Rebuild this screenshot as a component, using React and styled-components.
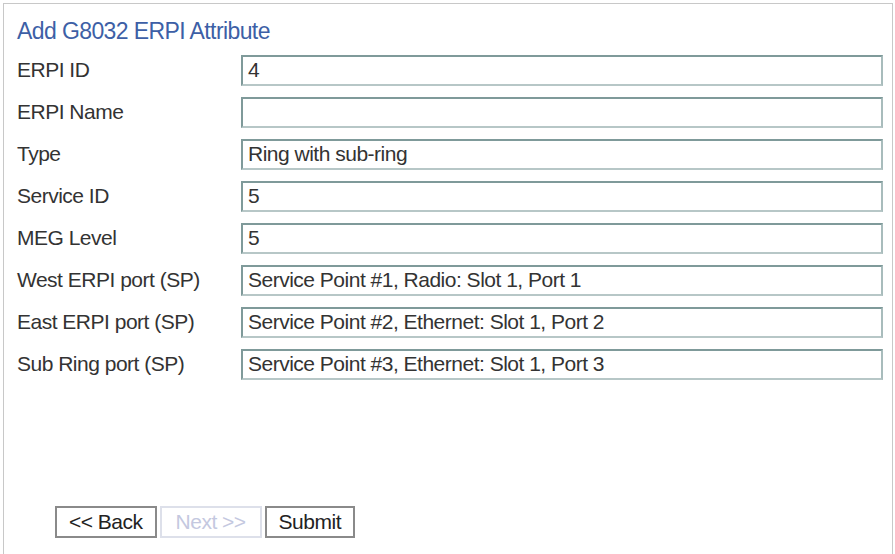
import React from "react";
import styled, { createGlobalStyle } from "styled-components";

const G = createGlobalStyle`
  html,body{margin:0;padding:0;background:#fff;}
  body{font-family:"Liberation Sans",Arial,sans-serif;}
`;
const Panel = styled.div`
  box-sizing:border-box;margin:3px 2px 0 3px;height:551px;border:1px solid #c8c8c8;border-bottom:none;
  padding:14px 9px 0 13px;display:flex;flex-direction:column;
`;
const Title = styled.div`color:#3d5fa6;font-size:23px;letter-spacing:-0.6px;margin-bottom:4px;`;
const Row = styled.div`display:flex;align-items:center;height:42px;`;
const Label = styled.div`width:224px;font-size:21px;letter-spacing:-0.5px;color:#333;white-space:nowrap;`;
const Field = styled.div`
  flex:1;height:31px;box-sizing:border-box;border:2px solid #7f9a9a;border-right-color:#a8bcbc;border-bottom-color:#b7c7c7;
  font-size:21px;letter-spacing:-0.5px;color:#333;padding:1px 5px;white-space:nowrap;
`;
const Buttons = styled.div`display:flex;gap:3px;margin-top:auto;margin-bottom:16px;margin-left:38px;`;
const Btn = styled.div`
  box-sizing:border-box;height:32px;padding:0 ${p=>p.$px}px;display:flex;align-items:center;font-size:21px;letter-spacing:-0.5px;
  border:2px solid ${p=>p.$off?"#dde0ea":"#8a8a8a"};color:${p=>p.$off?"#c4c8e0":"#222"};background:#fff;
`;
const rows=[["ERPI ID","4"],["ERPI Name",""],["Type","Ring with sub-ring"],["Service ID","5"],["MEG Level","5"],
["West ERPI port (SP)","Service Point #1, Radio: Slot 1, Port 1"],["East ERPI port (SP)","Service Point #2, Ethernet: Slot 1, Port 2"],["Sub Ring port (SP)","Service Point #3, Ethernet: Slot 1, Port 3"]];
export default function App(){return(<><G/><Panel>
<Title>Add G8032 ERPI Attribute</Title>
{rows.map(([l,v])=><Row key={l}><Label>{l}</Label><Field>{v}</Field></Row>)}
<Buttons><Btn $px={12}>&lt;&lt; Back</Btn><Btn $off $px={14}>Next &gt;&gt;</Btn><Btn $px={12}>Submit</Btn></Buttons>
</Panel></>);}
